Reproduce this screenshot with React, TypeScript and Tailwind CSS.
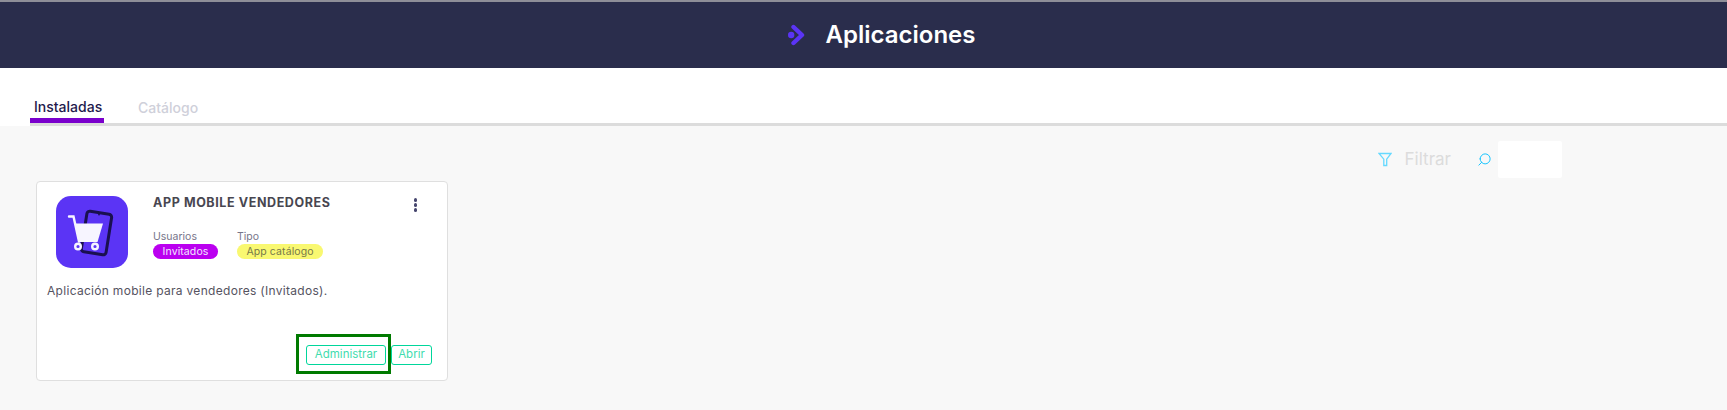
import { Search } from "lucide-react";

const font = "font-['Inter','Liberation_Sans',sans-serif]";

function HeaderMark() {
  return (
    <svg width="17" height="22" viewBox="0 0 17 22" fill="none" className="mr-[21px]">
      <path d="M5.5 3 L14 11 L5.5 19" stroke="#5b34f5" strokeWidth="4.4" strokeLinecap="round" strokeLinejoin="round" />
      <circle cx="3.2" cy="11" r="3.2" fill="#5b34f5" />
    </svg>
  );
}

function AppIcon() {
  return (
    <svg width="72" height="72" viewBox="0 0 72 72" className="shrink-0">
      <rect width="72" height="72" rx="15" fill="#5b34f5" />
      <rect x="28" y="16.5" width="25" height="41" rx="3" transform="rotate(9 40.5 37)" fill="none" stroke="#1a1050" strokeWidth="3" />
      <circle cx="43" cy="18.5" r="0.9" fill="#1a1050" />
      <path d="M19 27.5h28l-5.5 18.5h-19z" fill="#f7f5ff" />
      <path d="M13 20.5h4.5l5.5 25" fill="none" stroke="#f7f5ff" strokeWidth="2.4" strokeLinecap="round" />
      <circle cx="22" cy="50.5" r="2.8" fill="#5b34f5" stroke="#f7f5ff" strokeWidth="2.4" />
      <circle cx="39" cy="50.5" r="2.8" fill="#5b34f5" stroke="#f7f5ff" strokeWidth="2.4" />
    </svg>
  );
}

function FunnelIcon() {
  return (
    <svg width="14" height="15" viewBox="0 0 14 15" fill="none" stroke="#66d9ff" strokeWidth="1.3">
      <path d="M1 1.5h12L8.7 7.2v6.3H5.8V7.2z" />
    </svg>
  );
}

export default function App() {
  return (
    <div className={`${font} h-[410px] overflow-hidden bg-[#f8f8f8]`}>
      <div className="h-[2px] bg-[#8e8e98]" />
      <header className="flex h-[66px] items-center justify-center bg-[#2a2d4c] pl-[36px]">
        <HeaderMark />
        <h1 className="text-[24px] font-semibold leading-none text-white">Aplicaciones</h1>
      </header>

      <div className="bg-white pl-[30px] pt-[29px]">
        <nav className="flex h-[29px] border-b-[3px] border-[#dcdcdc]">
          <div className="w-[74px] border-b-[5px] border-[#7a00cc] pl-1 text-[14px] font-medium leading-[20px] text-[#1f1a4d]">
            Instaladas
          </div>
          <div className="ml-[34px] pt-[1px] text-[14px] font-medium leading-[20px] text-[#cfd0da]">Catálogo</div>
        </nav>
      </div>

      <div className="flex items-center justify-end pr-[165px] pt-[15px]">
        <FunnelIcon />
        <span className="ml-[13px] text-[17px] leading-none text-[#dcdcdc]">Filtrar</span>
        <Search size={15} strokeWidth={1.6} color="#18c5ff" className="ml-[26px] -scale-x-100" />
        <div className="ml-[6px] h-[37px] w-[64px] rounded-[2px] bg-white" />
      </div>

      <article className="ml-[36px] mt-[3px] flex h-[200px] w-[412px] flex-col rounded-[4px] border border-[#dfdfdf] bg-white pl-[10px] pr-[15px]">
        <div className="flex pl-[9px] pt-[14px]">
          <AppIcon />
          <div className="-mt-[2px] ml-[25px] flex-1">
            <div className="flex justify-between">
              <h2 className="text-[12.5px] font-bold leading-[18px] tracking-[0.6px] text-[#484650]">APP MOBILE VENDEDORES</h2>
              <div className="mr-[15px] mt-[4px] flex flex-col gap-[1.5px]">
                <span className="h-[3.5px] w-[3.5px] rounded-full bg-[#46466e]" />
                <span className="h-[3.5px] w-[3.5px] rounded-full bg-[#46466e]" />
                <span className="h-[3.5px] w-[3.5px] rounded-full bg-[#46466e]" />
              </div>
            </div>
            <div className="mt-[18px] flex gap-[19px]">
              <div>
                <p className="text-[10.5px] leading-[14px] text-[#77758a]">Usuarios</p>
                <span className="block h-[15px] w-[65px] rounded-full bg-[#bb00f0] text-center text-[10.5px] leading-[15px] tracking-[0.1px] text-[#f3e6ff]">
                  Invitados
                </span>
              </div>
              <div>
                <p className="text-[10.5px] leading-[14px] text-[#77758a]">Tipo</p>
                <span className="block h-[15px] w-[86px] rounded-full bg-[#f9f871] text-center text-[10.5px] leading-[15px] tracking-[0.1px] text-[#77784a]">
                  App catálogo
                </span>
              </div>
            </div>
          </div>
        </div>
        <p className="mt-[15px] text-[12px] leading-[16px] tracking-[0.3px] text-[#55535f]">Aplicación mobile para vendedores (Invitados).</p>
        <div className="mb-[15px] mt-auto flex justify-end gap-[5px]">
          <button className="relative h-[20px] w-[80px] rounded-[3px] border border-[#00d69b] bg-white text-[11.5px] leading-none text-[#3fdcae]">
            Administrar
            <span className="absolute -bottom-[10px] -left-[11px] -right-[6px] -top-[12px] border-[3px] border-[#007a00]" />
          </button>
          <button className="h-[20px] w-[41px] rounded-[3px] border border-[#00d69b] bg-white text-[11.5px] leading-none text-[#3fdcae]">
            Abrir
          </button>
        </div>
      </article>
    </div>
  );
}
